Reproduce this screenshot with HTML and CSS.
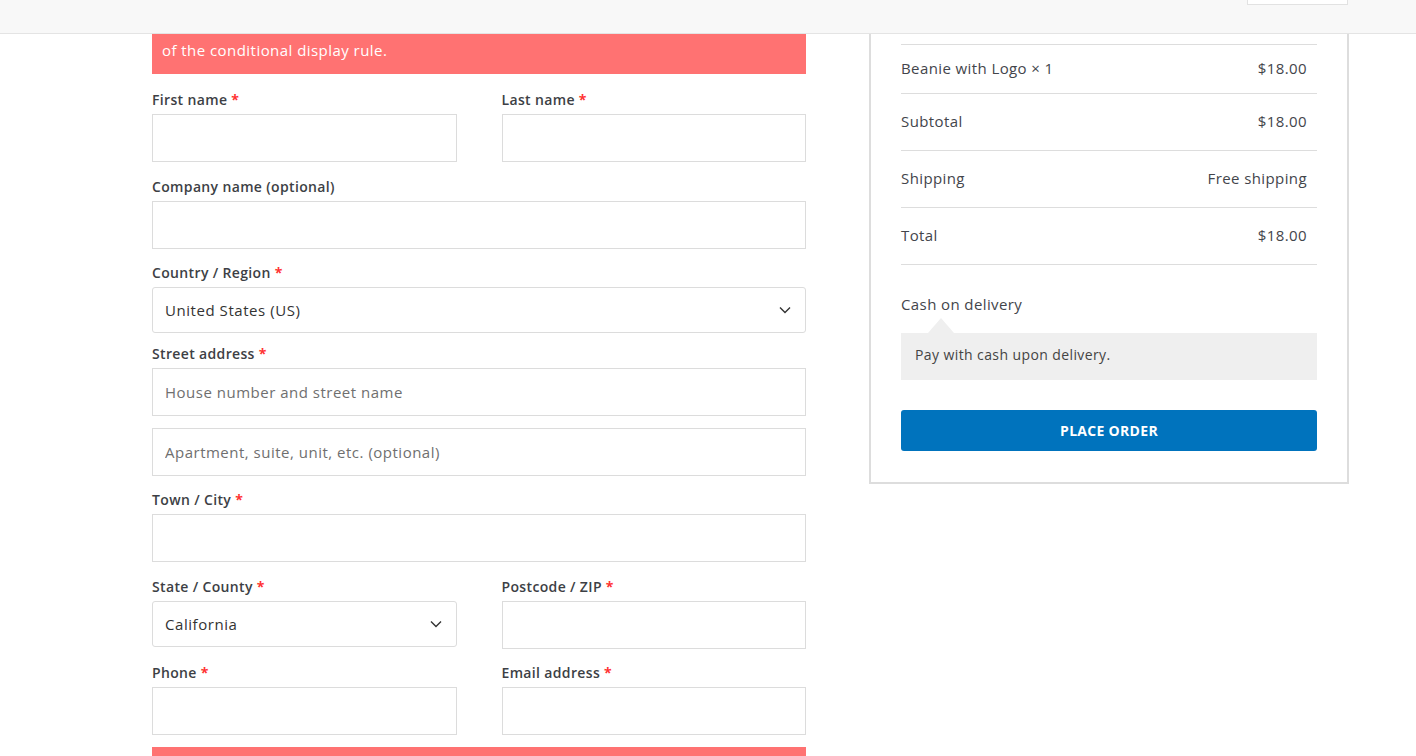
FILE: index.html
```html
<!DOCTYPE html>
<html lang="en">
<head>
<meta charset="utf-8">
<title>Checkout</title>
<link rel="stylesheet" href="styles.css">
</head>
<body>
<header class="topbar">
  <div class="topbar-box"></div>
</header>
<main class="checkout">
  <section class="billing">
    <div class="notice">of the conditional display rule.</div>

    <div class="row two gap15">
      <div class="field">
        <label class="lbl">First name <span class="req">*</span></label>
        <input class="inp" type="text">
      </div>
      <div class="field">
        <label class="lbl">Last name <span class="req">*</span></label>
        <input class="inp" type="text">
      </div>
    </div>

    <div class="row gap14">
      <div class="field">
        <label class="lbl">Company name (optional)</label>
        <input class="inp" type="text">
      </div>
    </div>

    <div class="row gap11">
      <div class="field">
        <label class="lbl">Country / Region <span class="req">*</span></label>
        <div class="sel"><span>United States (US)</span>
          <svg class="chev" width="12" height="8" viewBox="0 0 12 8"><path d="M1 1.5 L6 6.5 L11 1.5" fill="none" stroke="#333" stroke-width="1.4"/></svg>
        </div>
      </div>
    </div>

    <div class="row gap14">
      <div class="field">
        <label class="lbl">Street address <span class="req">*</span></label>
        <input class="inp" type="text" placeholder="House number and street name">
        <input class="inp second" type="text" placeholder="Apartment, suite, unit, etc. (optional)">
      </div>
    </div>

    <div class="row gap15">
      <div class="field">
        <label class="lbl">Town / City <span class="req">*</span></label>
        <input class="inp" type="text">
      </div>
    </div>

    <div class="row two gap14">
      <div class="field">
        <label class="lbl">State / County <span class="req">*</span></label>
        <div class="sel"><span>California</span>
          <svg class="chev" width="12" height="8" viewBox="0 0 12 8"><path d="M1 1.5 L6 6.5 L11 1.5" fill="none" stroke="#333" stroke-width="1.4"/></svg>
        </div>
      </div>
      <div class="field">
        <label class="lbl">Postcode / ZIP <span class="req">*</span></label>
        <input class="inp" type="text">
      </div>
    </div>

    <div class="row two gap12">
      <div class="field">
        <label class="lbl">Phone <span class="req">*</span></label>
        <input class="inp" type="tel">
      </div>
      <div class="field">
        <label class="lbl">Email address <span class="req">*</span></label>
        <input class="inp" type="email">
      </div>
    </div>

    <div class="notice notice-bottom"></div>
  </section>

  <aside class="review">
    <div class="review-top"></div>
    <div class="line first"><span>Beanie with Logo&nbsp;×&nbsp;1</span><span class="val">$18.00</span></div>
    <div class="line"><span>Subtotal</span><span class="val">$18.00</span></div>
    <div class="line"><span>Shipping</span><span class="val">Free shipping</span></div>
    <div class="line last"><span>Total</span><span class="val">$18.00</span></div>

    <div class="pay-method">Cash on delivery</div>
    <div class="pay-box">Pay with cash upon delivery.</div>

    <button class="place" type="button">PLACE ORDER</button>
  </aside>
</main>
</body>
</html>
```
FILE: styles.css
```css
* { box-sizing: border-box; }
html, body { margin: 0; padding: 0; background: #fff; }
body {
  font-family: "Open Sans", "Liberation Sans", sans-serif;
  color: #404040;
  overflow: hidden;
  height: 756px;
}

.topbar {
  height: 34px;
  background: #f8f8f8;
  border-bottom: 1px solid #e4e4e4;
  display: flex;
  justify-content: flex-end;
  padding-right: 68px;
}
.topbar-box {
  width: 101px;
  height: 5px;
  background: #fff;
  border: 1px solid #e2e2e2;
  border-top: none;
}

.checkout {
  display: flex;
  align-items: flex-start;
  padding-left: 152px;
  gap: 63px;
}

.billing { width: 654px; flex: none; }

.notice {
  background: #ff7272;
  color: #fff;
  font-size: 15px;
  letter-spacing: 0.45px;
  line-height: 20px;
  padding: 6px 10px 14px;
  margin-bottom: 16px;
}
.notice-bottom { height: 20px; padding: 0; margin: 0; }

.row { display: flex; gap: 45px; }
.row .field { flex: 1; min-width: 0; display: flex; flex-direction: column; }
.gap15 { margin-bottom: 15px; }
.gap14 { margin-bottom: 14px; }
.gap12 { margin-bottom: 12px; }
.gap11 { margin-bottom: 11px; }

.lbl {
  font-size: 14px;
  font-weight: 600;
  letter-spacing: 0.35px;
  line-height: 20px;
  color: #3d3f45;
  margin-bottom: 4px;
}
.req { color: #f33; font-weight: 700; }

.inp {
  display: block;
  width: 100%;
  height: 48px;
  border: 1px solid #dcdcdc;
  background: #fff;
  padding: 0 12px;
  font: inherit;
  font-size: 15px;
  letter-spacing: 0.5px;
  color: #333;
  outline: none;
}
.inp::placeholder { color: #6f6f6f; }
.inp.second { margin-top: 12px; }

.sel {
  height: 46px;
  border: 1px solid #dcdcdc;
  border-radius: 3px;
  display: flex;
  align-items: center;
  justify-content: space-between;
  padding: 0 14px 0 12px;
  font-size: 15px;
  letter-spacing: 0.55px;
  color: #333;
}
.chev { flex: none; }

.review {
  width: 480px;
  flex: none;
  border: 2px solid #dddddd;
  border-top: none;
  padding: 0 30px 31px;
  color: #43454b;
  font-size: 15px;
  letter-spacing: 0.4px;
}
.review-top { height: 10px; }
.line {
  display: flex;
  justify-content: space-between;
  border-top: 1px solid #dddddd;
  line-height: 24px;
  padding: 15px 10px 17px 0;
}
.line.first { padding: 11px 10px 13px 0; }
.line.last { border-bottom: 1px solid #dddddd; }

.pay-method {
  line-height: 24px;
  margin-top: 27px;
  margin-bottom: 17px;
}
.pay-box {
  position: relative;
  background: #efefef;
  font-size: 14px;
  letter-spacing: 0.4px;
  line-height: 20px;
  padding: 12px 14px 15px;
  color: #444;
}
.pay-box::before {
  content: "";
  position: absolute;
  left: 27px;
  top: -15px;
  border-left: 13px solid transparent;
  border-right: 13px solid transparent;
  border-bottom: 15px solid #efefef;
}

.place {
  display: block;
  width: 100%;
  height: 41px;
  margin-top: 30px;
  border: none;
  border-radius: 3px;
  background: #0073bd;
  color: #fff;
  font-family: inherit;
  font-size: 14px;
  font-weight: 700;
  letter-spacing: 0.3px;
}
```
